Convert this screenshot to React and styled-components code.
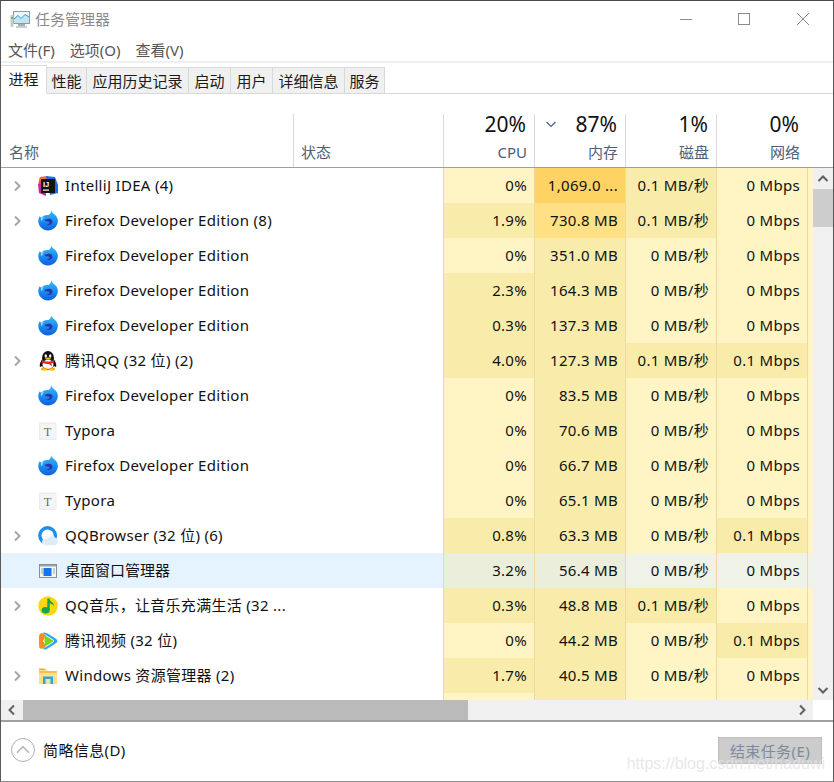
import React from "react";
import styled, { createGlobalStyle } from "styled-components";

const GlobalStyle = createGlobalStyle`
  html, body {
    margin: 0;
    padding: 0;
    background: #fff;
  }
  * {
    box-sizing: border-box;
  }
`;

const columns = "292px 150px 91px 91px 91px 91px 6px";

// heat colours of the value cells, normal and with the row hovered
const heat = ["#fff4c4", "#f9ecaa", "#ffe084", "#ffd264"];
const heatHover = ["#eff2e6", "#ebeedb", "#ebeedb", "#ebeedb"];

const Window = styled.div`
  position: relative;
  width: 834px;
  height: 782px;
  display: flex;
  flex-direction: column;
  overflow: hidden;
  background: #fff;
  border-top: 1px solid #4a4a4a;
  border-left: 1px solid #5a5a5a;
  border-right: 1px solid #555;
  border-bottom: 1px solid #8c8c8c;
  font-family: "Noto Sans", "Noto Sans CJK SC", sans-serif;
  font-size: 15px;
  color: #111;
`;

const TitleBar = styled.div`
  height: 36px;
  display: flex;
  align-items: center;
  padding: 0 1px 0 9px;
  flex-shrink: 0;
`;

const Title = styled.div`
  margin-left: 4px;
  color: #8b8b8b;
  flex: 1;
  margin-top: -1px;
`;

const WinButton = styled.div`
  width: 58.5px;
  height: 36px;
  display: flex;
  align-items: center;
  justify-content: center;
  margin-top: -1px;
`;

const MenuBar = styled.div`
  height: 24px;
  display: flex;
  gap: 15px;
  align-items: center;
  padding-left: 7px;
  color: #555;
  flex-shrink: 0;
`;

const Rule = styled.div`
  height: 2px;
  background: #f0f0f0;
  flex-shrink: 0;
`;

const TabStrip = styled.div`
  height: 31px;
  display: flex;
  align-items: flex-end;
  border-bottom: 1px solid #d9d9d9;
  flex-shrink: 0;
`;

const Tab = styled.div`
  width: ${(p) => p.$w}px;
  height: ${(p) => (p.$active ? 29 : 26)}px;
  margin-bottom: ${(p) => (p.$active ? -1 : 0)}px;
  display: flex;
  align-items: center;
  justify-content: center;
  background: ${(p) => (p.$active ? "#fff" : "#f0f0f0")};
  border: 1px solid #d9d9d9;
  border-left: ${(p) => (p.$active ? 0 : "none")};
  border-bottom: ${(p) => (p.$active ? "1px solid #fff" : "none")};
  color: #1a1a1a;
  padding-bottom: ${(p) => (p.$active ? 2 : 0)}px;
`;

const Header = styled.div`
  height: 74px;
  padding-top: 20px;
  display: grid;
  grid-template-columns: ${columns};
  border-bottom: 1px solid #a0a0a0;
  flex-shrink: 0;
`;

const NameHead = styled.div`
  display: flex;
  align-items: flex-end;
  padding: 0 0 5px 8px;
  color: #4c607a;
`;

const StateHead = styled(NameHead)`
  border-left: 1px solid #d9d9d9;
  padding-left: 7px;
`;

const MetricHead = styled.div`
  border-left: 1px solid #d9d9d9;
  display: flex;
  flex-direction: column;
  padding: 0 7px 5px 10px;
`;

const MetricTop = styled.div`
  display: flex;
  align-items: center;
  justify-content: ${(p) => (p.$sorted ? "space-between" : "flex-end")};
  height: 22px;
  margin-top: -1px;
  padding-right: 1px;
  font-size: 21px;
  color: #111;
  line-height: 22px;
`;

const MetricLabel = styled.div`
  margin-top: auto;
  text-align: right;
  color: #4c607a;
`;

const Main = styled.div`
  display: flex;
  height: 532px;
  flex-shrink: 0;
`;

const Rows = styled.div`
  width: 812px;
  overflow: hidden;
`;

const Row = styled.div`
  height: 35px;
  display: grid;
  grid-template-columns: ${columns};
  background: ${(p) => (p.$hover ? "#e5f3ff" : "#fff")};
`;

const NameCell = styled.div`
  display: flex;
  align-items: center;
  white-space: nowrap;
  min-width: 0;
`;

const Arrow = styled.div`
  width: 37px;
  display: flex;
  align-items: center;
  padding-left: 10px;
  flex-shrink: 0;
`;

const AppName = styled.span`
  margin-left: 7px;
  padding-bottom: 2px;
  letter-spacing: ${(p) => (p.$cjk ? 0 : 0.3)}px;
`;

const ValueCell = styled.div`
  background: ${(p) => (p.$hover ? heatHover[p.$level] : heat[p.$level])};
  border-left: 1px solid #eed9a0;
  display: flex;
  align-items: center;
  justify-content: flex-end;
  padding: 0 7px 2px 0;
  white-space: nowrap;
  letter-spacing: 0.3px;
`;

const Filler = styled.div`
  background: ${(p) => (p.$hover ? heatHover[0] : heat[0])};
  border-left: 1px solid #eed9a0;
`;

const VScroll = styled.div`
  width: 20px;
  background: #f0f0f0;
  display: flex;
  flex-direction: column;
`;

const VButton = styled.div`
  height: 21px;
  display: flex;
  align-items: center;
  justify-content: center;
  flex-shrink: 0;
`;

const VThumb = styled.div`
  height: 38px;
  background: #cdcdcd;
  flex-shrink: 0;
`;

const VTrack = styled.div`
  flex: 1;
`;

const HScrollRow = styled.div`
  height: 20px;
  display: flex;
  flex-shrink: 0;
`;

const HScroll = styled.div`
  width: 812px;
  background: #f0f0f0;
  display: flex;
`;

const HButton = styled.div`
  width: 22px;
  display: flex;
  align-items: center;
  justify-content: center;
  flex-shrink: 0;
`;

const HThumb = styled.div`
  width: 445px;
  background: #bababa;
  flex-shrink: 0;
`;

const HTrack = styled.div`
  flex: 1;
`;

const Footer = styled.div`
  flex: 1;
  border-top: 2px solid #a0a0a0;
  display: flex;
  align-items: center;
  padding: 0 11px 3px 10px;
`;

const Expander = styled.div`
  width: 24px;
  height: 24px;
  border: 1px solid #b0b0b0;
  border-radius: 50%;
  display: flex;
  align-items: center;
  justify-content: center;
  margin-right: 8px;
`;

const FooterLabel = styled.div`
  flex: 1;
  letter-spacing: 0.4px;
  padding-bottom: 1px;
`;

const EndTask = styled.div`
  width: 104px;
  height: 27px;
  background: #cccccc;
  border: 1px solid #bfbfbf;
  color: #7d8ba0;
  display: flex;
  align-items: center;
  justify-content: center;
  letter-spacing: 0.4px;
`;

const Watermark = styled.div`
  position: absolute;
  right: 8px;
  bottom: 8px;
  font-family: "Liberation Sans", sans-serif;
  font-size: 16px;
  color: rgba(226, 226, 226, 0.8);
  pointer-events: none;
`;

function Chevron({ dir = "right", color = "#a6a6a6", size = 12, w = 2 }) {
  const pts = {
    right: "4,1.5 8.5,6 4,10.5",
    left: "8,1.5 3.5,6 8,10.5",
    up: "1.5,8 6,3.5 10.5,8",
    down: "1.5,4 6,8.5 10.5,4",
  };
  return (
    <svg width={size} height={size} viewBox="0 0 12 12">
      <polyline points={pts[dir]} fill="none" stroke={color} strokeWidth={w} />
    </svg>
  );
}

function MonitorIcon() {
  return (
    <svg width="21" height="20" viewBox="0 0 21 20">
      <rect x="3.5" y="2.5" width="16" height="12" fill="#eef6fb" stroke="#8f9ba3" />
      <polygon points="4,14 4,9 8,6 11,9 15,5 19,8 19,14" fill="#bfe3f5" />
      <polyline points="4,10 8,6.5 11,9.5 15,5.5 19,8" fill="none" stroke="#3f9bd0" />
      <rect x="8" y="15" width="7" height="2" fill="#a9b0b5" />
      <rect x="6" y="17" width="11" height="2" fill="#c9ced1" />
      <rect x="0.5" y="6" width="3" height="12" fill="#c8ccce" />
      <rect x="1" y="8" width="2" height="2" fill="#5cc05c" />
    </svg>
  );
}

function IdeaIcon() {
  return (
    <svg width="20" height="20" viewBox="0 0 20 20">
      <polygon points="2,1 10,0 10,8 0,9" fill="#f5455c" />
      <polygon points="0,8 8,8 8,20 1,17" fill="#c9249a" />
      <polygon points="8,0 17,1 20,9 20,17 12,19 10,8" fill="#1a6fe8" />
      <polygon points="1,2 8,1 4,7" fill="#fc801d" />
      <rect x="3" y="3" width="14" height="14" fill="#111" />
      <text x="5" y="10.5" fontFamily="Liberation Sans" fontWeight="700" fontSize="7.5" fill="#fff">
        IJ
      </text>
      <rect x="5" y="13.5" width="6" height="1.2" fill="#fff" />
    </svg>
  );
}

function FirefoxIcon() {
  return (
    <svg width="20" height="21" viewBox="0 0 20 21">
      <defs>
        <linearGradient id="ffBody" x1="0" y1="0" x2="0" y2="1">
          <stop offset="0" stopColor="#37bdf9" />
          <stop offset="0.55" stopColor="#1a8cf0" />
          <stop offset="1" stopColor="#0f5fdc" />
        </linearGradient>
      </defs>
      <path
        d="M13 0 C13.6 2.6 16 3.6 17.6 5.4 C19.6 7.6 20 9.6 19.8 11.4 C19.4 16.6 15 20.4 10 20.4 C4.6 20.4 0.3 16 0.3 11 C0.3 8.8 1.1 7 2 6 C2.2 7 2.6 7.4 3.2 7.8 C4.6 5.6 7.6 4.6 10.6 5 C12.4 4 13.4 2 13 0 Z"
        fill="url(#ffBody)"
      />
      <path
        d="M6.5 10.6 C7.6 8.8 10.4 8.2 12.6 9 C14.8 9.9 15 12.6 13.4 14 C11.8 15.4 9.4 15.2 8 14.2 C9.6 14.4 11 14 11.4 13 C11.7 12.2 11 11.6 10 11.6 C8.8 11.6 7.6 11.2 6.5 10.6 Z"
        fill="#2a34a8"
      />
      <path d="M3 8.8 C3.6 7.8 5 7 6 6.8 C5 8 4.2 9.4 4 11.4 C3.3 10.8 3 9.8 3 8.8 Z" fill="#a5e2fb" />
    </svg>
  );
}

function QQIcon() {
  return (
    <svg width="20" height="20" viewBox="0 0 20 20">
      <ellipse cx="10" cy="7" rx="6" ry="7" fill="#111" />
      <path d="M4.4 8 C1.8 11.5 1.2 15 2.2 16 L5 14.5 Z" fill="#111" />
      <path d="M15.6 8 C18.2 11.5 18.8 15 17.8 16 L15 14.5 Z" fill="#111" />
      <ellipse cx="10" cy="13.5" rx="5.8" ry="5.2" fill="#fff" stroke="#111" strokeWidth="0.7" />
      <ellipse cx="7.8" cy="5" rx="1.2" ry="1.8" fill="#fff" />
      <ellipse cx="12.2" cy="5" rx="1.2" ry="1.8" fill="#fff" />
      <ellipse cx="10" cy="7.6" rx="2.8" ry="1.2" fill="#f7b500" />
      <path d="M4 9 C7.5 11 12.5 11 16 9 L16.2 11.4 C15 12 14 12.2 13.4 12.3 L13.8 15.4 L11 13 C9 12.9 6 12.6 3.8 11.4 Z" fill="#e8232a" />
      <ellipse cx="6.2" cy="18" rx="3.2" ry="1.5" fill="#f7b500" />
      <ellipse cx="13.8" cy="18" rx="3.2" ry="1.5" fill="#f7b500" />
    </svg>
  );
}

function TyporaIcon() {
  return (
    <svg width="20" height="20" viewBox="0 0 20 20">
      <rect x="1" y="1.5" width="17.5" height="17.5" rx="1" fill="#ededed" />
      <rect x="2.5" y="3" width="15" height="14.5" fill="#f5f5f5" />
      <text x="5.8" y="14.6" fontFamily="Liberation Serif" fontSize="12.5" fill="#6e6e6e">
        T
      </text>
    </svg>
  );
}

function BrowserIcon() {
  return (
    <svg width="20" height="20" viewBox="0 0 20 20">
      <circle cx="9.6" cy="9.6" r="7.8" fill="#fff" stroke="#1a8ff0" strokeWidth="3.4" />
      <path d="M4.5 15.5 C5 13 7.5 12 9.5 12.6 C10.5 9.8 14 9 16.2 10.8 C16.8 11.4 17 12 17.2 12.6 C19 12.8 20 14 20 15.6 C20 17.6 18.5 19.4 16.5 19.4 L8.5 19.4 C6 19.4 4.5 17.6 4.5 15.5 Z" fill="#dcecf8" stroke="#fff" strokeWidth="0.8" />
    </svg>
  );
}

function DwmIcon() {
  return (
    <svg width="20" height="20" viewBox="0 0 20 20">
      <rect x="1.5" y="3.5" width="17" height="13" fill="#f4f4f4" stroke="#8a8f96" />
      <rect x="2" y="4" width="16" height="1.5" fill="#9ea3a9" />
      <rect x="5.5" y="7" width="8" height="8" fill="#0f78e6" />
      <path d="M3 8 H5 M3 10 H5 M3 12 H5 M15 8 H17 M15 10 H17 M15 12 H17" stroke="#9ea3a9" />
    </svg>
  );
}

function MusicIcon() {
  return (
    <svg width="20" height="20" viewBox="0 0 20 20">
      <circle cx="10" cy="10" r="9.8" fill="#fdd80a" />
      <path d="M10.5 2.5 V14" stroke="#12a35a" strokeWidth="2.4" fill="none" />
      <path d="M10.5 2.5 C11.5 5.5 16 5.6 16 10 C14.5 8 12.8 7.6 11.5 7.6 Z" fill="#12a35a" />
      <ellipse cx="7.6" cy="14.2" rx="4" ry="3.2" fill="#12a35a" />
    </svg>
  );
}

function VideoIcon() {
  return (
    <svg width="20" height="20" viewBox="0 0 20 20">
      <path d="M1 6 C1 2 3 1.5 6 3 L8 4.5 L5 10 L8 15.5 L6 17 C3 18.5 1 18 1 14 Z" fill="#ff8a1f" />
      <path d="M4 2.2 C6 0.8 8 1.5 10 2.8 L17.5 7.5 C20 9 20 11 17.5 12.5 L10 17.2 C8 18.5 6 19.2 4 17.8 C5.4 17.8 6.5 17 8 16 L15 11.4 C16.4 10.5 16.4 9.5 15 8.6 L8 4 C6.5 3 5.4 2.2 4 2.2 Z" fill="#25a7f5" />
      <path d="M6.5 6.5 C6.5 5 7.5 4.6 8.8 5.4 L14.4 9 C15.4 9.6 15.4 10.4 14.4 11 L8.8 14.6 C7.5 15.4 6.5 15 6.5 13.5 Z" fill="#7cd321" />
    </svg>
  );
}

function FolderIcon() {
  return (
    <svg width="20" height="20" viewBox="0 0 20 20">
      <path d="M1 3 H8 L10 5 H19 V18 H1 Z" fill="#ffe08a" />
      <rect x="1" y="5" width="18" height="2" fill="#f5c04a" />
      <rect x="1" y="2.5" width="6" height="1.5" fill="#e8a93a" />
      <path d="M5 18 V10.5 H15 V18 H12.5 V13 H7.5 V18 Z" fill="#2aa5e8" />
    </svg>
  );
}

const icons = {
  idea: IdeaIcon,
  firefox: FirefoxIcon,
  qq: QQIcon,
  typora: TyporaIcon,
  browser: BrowserIcon,
  dwm: DwmIcon,
  music: MusicIcon,
  video: VideoIcon,
  folder: FolderIcon,
};

const FF = "Firefox Developer Edition";

// name, icon, expandable, cpu, memory, disk, network, memory heat level
const processes = [
  ["IntelliJ IDEA (4)", "idea", true, "0%", "1,069.0 ...", "0.1 MB/秒", "0 Mbps", 3],
  [FF + " (8)", "firefox", true, "1.9%", "730.8 MB", "0.1 MB/秒", "0 Mbps", 2],
  [FF, "firefox", false, "0%", "351.0 MB", "0 MB/秒", "0 Mbps", 1],
  [FF, "firefox", false, "2.3%", "164.3 MB", "0 MB/秒", "0 Mbps", 1],
  [FF, "firefox", false, "0.3%", "137.3 MB", "0 MB/秒", "0 Mbps", 1],
  ["腾讯QQ (32 位) (2)", "qq", true, "4.0%", "127.3 MB", "0.1 MB/秒", "0.1 Mbps", 1],
  [FF, "firefox", false, "0%", "83.5 MB", "0 MB/秒", "0 Mbps", 1],
  ["Typora", "typora", false, "0%", "70.6 MB", "0 MB/秒", "0 Mbps", 1],
  [FF, "firefox", false, "0%", "66.7 MB", "0 MB/秒", "0 Mbps", 1],
  ["Typora", "typora", false, "0%", "65.1 MB", "0 MB/秒", "0 Mbps", 1],
  ["QQBrowser (32 位) (6)", "browser", true, "0.8%", "63.3 MB", "0 MB/秒", "0.1 Mbps", 1],
  ["桌面窗口管理器", "dwm", false, "3.2%", "56.4 MB", "0 MB/秒", "0 Mbps", 1],
  ["QQ音乐，让音乐充满生活 (32 ...", "music", true, "0.3%", "48.8 MB", "0.1 MB/秒", "0 Mbps", 1],
  ["腾讯视频 (32 位)", "video", false, "0%", "44.2 MB", "0 MB/秒", "0.1 Mbps", 1],
  ["Windows 资源管理器 (2)", "folder", true, "1.7%", "40.5 MB", "0 MB/秒", "0 Mbps", 1],
];

const tabs = [
  ["进程", 46],
  ["性能", 40],
  ["应用历史记录", 102],
  ["启动", 42],
  ["用户", 42],
  ["详细信息", 72],
  ["服务", 40],
];

const metrics = [
  ["20%", "CPU"],
  ["87%", "内存", true],
  ["1%", "磁盘"],
  ["0%", "网络"],
];

// anything other than a bare zero gets the stronger tint
const level = (value) => (value.startsWith("0%") || value.startsWith("0 ") ? 0 : 1);

function ProcessRow({ row, hover }) {
  const [name, icon, expandable, cpu, mem, disk, net, memLevel] = row;
  const Icon = icons[icon];
  return (
    <Row $hover={hover}>
      <NameCell>
        <Arrow>{expandable && <Chevron />}</Arrow>
        <Icon />
        <AppName $cjk={/^[\u4e00-\u9fff]+$/.test(name)}>{name}</AppName>
      </NameCell>
      <div />
      <ValueCell $level={level(cpu)} $hover={hover}>{cpu}</ValueCell>
      <ValueCell $level={memLevel} $hover={hover}>{mem}</ValueCell>
      <ValueCell $level={level(disk)} $hover={hover}>{disk}</ValueCell>
      <ValueCell $level={level(net)} $hover={hover}>{net}</ValueCell>
      <Filler $hover={hover} />
    </Row>
  );
}

export default function App() {
  return (
    <Window>
      <GlobalStyle />
      <TitleBar>
        <MonitorIcon />
        <Title>任务管理器</Title>
        <WinButton>
          <svg width="14" height="14" viewBox="0 0 14 14">
            <path d="M1 7.5 H13" stroke="#8a8a8a" />
          </svg>
        </WinButton>
        <WinButton>
          <svg width="14" height="14" viewBox="0 0 14 14">
            <rect x="1.5" y="1.5" width="11" height="11" fill="none" stroke="#8a8a8a" />
          </svg>
        </WinButton>
        <WinButton>
          <svg width="14" height="14" viewBox="0 0 14 14">
            <path d="M1 1 L13 13 M13 1 L1 13" stroke="#8a8a8a" />
          </svg>
        </WinButton>
      </TitleBar>
      <MenuBar>
        <span>文件(F)</span>
        <span>选项(O)</span>
        <span>查看(V)</span>
      </MenuBar>
      <Rule />
      <TabStrip>
        {tabs.map(([label, w], i) => (
          <Tab key={label} $w={w} $active={i === 0}>
            {label}
          </Tab>
        ))}
      </TabStrip>
      <Header>
        <NameHead>名称</NameHead>
        <StateHead>状态</StateHead>
        {metrics.map(([pct, label, sorted]) => (
          <MetricHead key={label}>
            <MetricTop $sorted={sorted}>
              {sorted && <Chevron dir="down" color="#4c607a" w={1.2} />}
              <span>{pct}</span>
            </MetricTop>
            <MetricLabel>{label}</MetricLabel>
          </MetricHead>
        ))}
        <div />
      </Header>
      <Main>
        <Rows>
          {processes.map((row, i) => (
            <ProcessRow key={i} row={row} hover={i === 11} />
          ))}
          {/* the next row is only just scrolled into view */}
          <Row>
            <div />
            <div />
            <ValueCell $level={0} />
            <ValueCell $level={1} />
            <ValueCell $level={0} />
            <ValueCell $level={0} />
            <Filler />
          </Row>
        </Rows>
        <VScroll>
          <VButton>
            <Chevron dir="up" color="#606060" />
          </VButton>
          <VThumb />
          <VTrack />
          <VButton>
            <Chevron dir="down" color="#606060" />
          </VButton>
        </VScroll>
      </Main>
      <HScrollRow>
        <HScroll>
          <HButton>
            <Chevron dir="left" color="#606060" />
          </HButton>
          <HThumb />
          <HTrack />
          <HButton>
            <Chevron dir="right" color="#606060" />
          </HButton>
        </HScroll>
      </HScrollRow>
      <Footer>
        <Expander>
          <Chevron dir="up" color="#b0b0b0" size={16} w={1} />
        </Expander>
        <FooterLabel>简略信息(D)</FooterLabel>
        <EndTask>结束任务(E)</EndTask>
      </Footer>
      <Watermark>https://blog.csdn.net/haduwi</Watermark>
    </Window>
  );
}
